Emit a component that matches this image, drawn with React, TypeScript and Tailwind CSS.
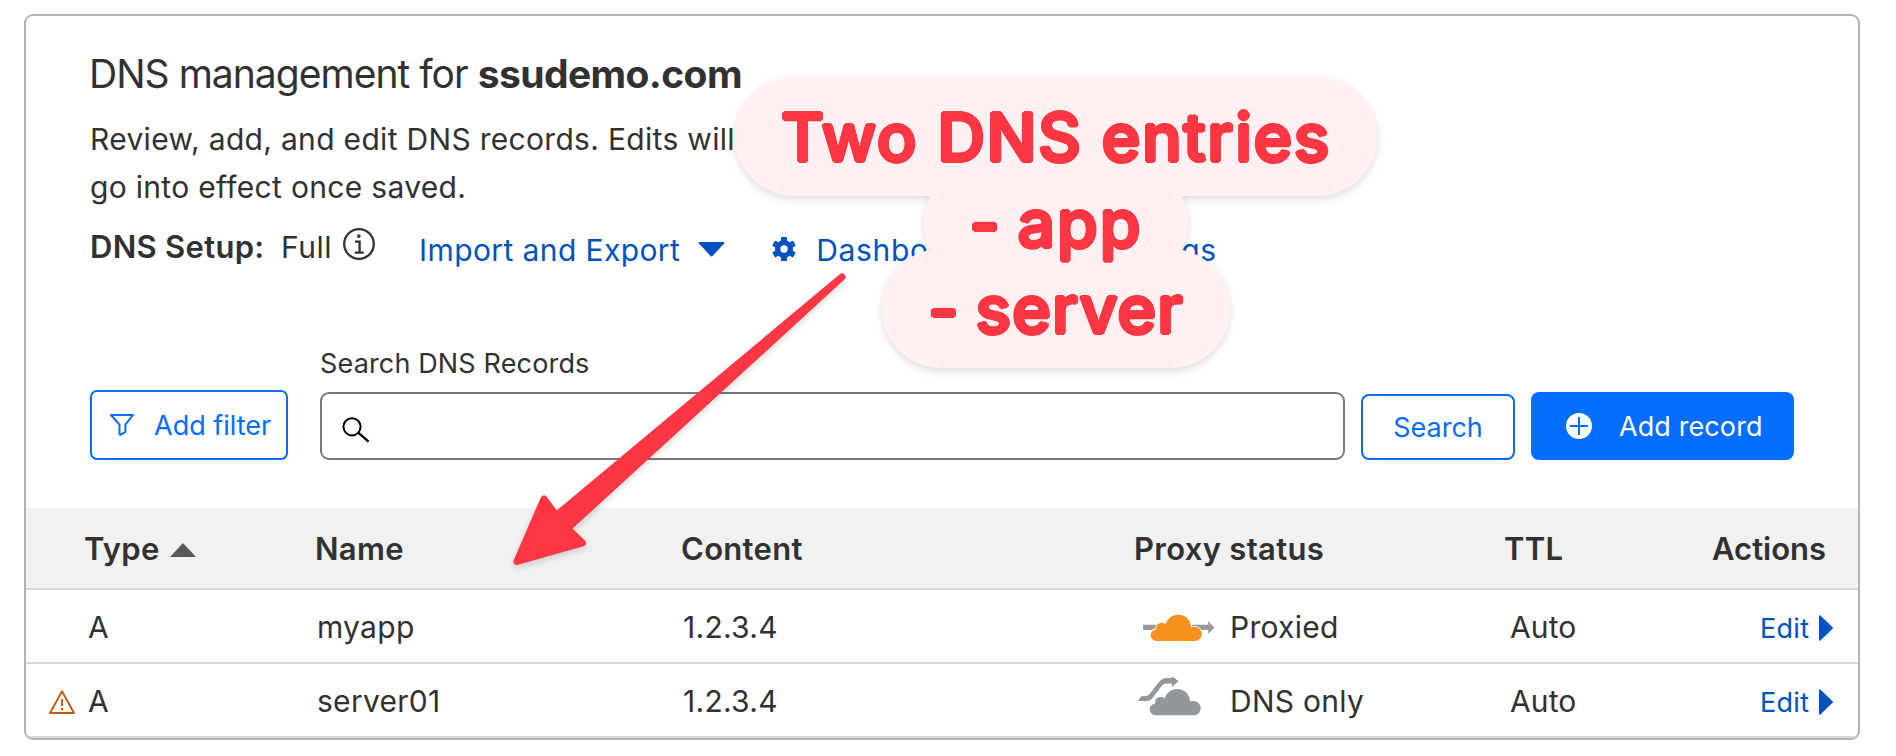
import React from "react";

const COLUMNS = "grid grid-cols-[58px_231px_366px_452px_371px_1fr]";

function InfoIcon() {
  return (
    <svg className="h-8 w-8" viewBox="0 0 32 32" fill="none" stroke="#313131">
      <circle cx="16" cy="16" r="14.8" strokeWidth="2.3" />
      <path d="M12 13.6h4.6V24.6M11.8 24.6h9" strokeWidth="2.3" />
      <rect x="14.2" y="6.6" width="3.2" height="3.2" fill="#313131" stroke="none" />
    </svg>
  );
}

function GearIcon() {
  return (
    <svg className="h-6 w-6" viewBox="0 0 24 24">
      <g fill="#0051c3">
        <rect x="9" y="0" width="6" height="24" rx="1" />
        <rect x="9" y="0" width="6" height="24" rx="1" transform="rotate(60 12 12)" />
        <rect x="9" y="0" width="6" height="24" rx="1" transform="rotate(120 12 12)" />
        <circle cx="12" cy="12" r="9" />
      </g>
      <circle cx="12" cy="12" r="3.7" fill="#fff" />
    </svg>
  );
}

function FunnelIcon() {
  return (
    <svg className="h-6 w-[26px]" viewBox="0 0 26 24" fill="none" stroke="#056dff" strokeWidth="2">
      <path d="M2 2h22l-7.6 9.6v7.2L11.4 21.8l-.9-.6V11.6z" strokeLinejoin="round" />
    </svg>
  );
}

function MagnifierIcon() {
  return (
    <svg className="h-[26px] w-7" viewBox="0 0 28 26" fill="none" stroke="#000" strokeWidth="2">
      <circle cx="10" cy="9.8" r="8.6" />
      <path d="M16.200 15.600l10.400 9" strokeWidth="2.400" />
    </svg>
  );
}

function PlusCircleIcon() {
  return (
    <svg className="h-[26px] w-[26px]" viewBox="0 0 26 26">
      <circle cx="13" cy="13" r="13" fill="#fff" />
      <path d="M13 4v18M4 13h18" stroke="#056dff" strokeWidth="2" />
    </svg>
  );
}

function WarningIcon() {
  return (
    <svg className="h-6 w-[26px]" viewBox="0 0 26 24" fill="none" stroke="#c25a0a" strokeWidth="1.9">
      <path d="M13 1.2L25 23H1z" strokeLinejoin="round" />
      <path d="M13 9v7M13 17.8v2.4" />
    </svg>
  );
}

const CLOUD =
  "M6.5 26.5C2.8 26.5.3 24.2.3 20.8c0-3.300 2.200-5.600 5.300-5.800-.3-4 2.100-6.600 5.500-6.600 1.600 0 3 .5 4.100 1.500C16.600 4.400 21.500.3 27.700.3c7.200 0 12.800 5.400 12.900 12.700 1-.5 1.900-.6 3-.6 4.400 0 7.600 3.200 7.600 7.100 0 4-2.900 7-7 7z";

function ProxiedIcon() {
  return (
    <svg className="h-7 w-[72px]" viewBox="0 0 72 28">
      <path d="M0 10.700h65.200V7.200l6.200 6.300-6.200 6.500v-3.900H0z" fill="#999" />
      <path d={CLOUD} transform="translate(7.500 .4)" fill="#f6901e" stroke="#fff" strokeWidth="1.600" paintOrder="stroke" />
    </svg>
  );
}

function DnsOnlyIcon() {
  return (
    <svg className="h-10 w-16" viewBox="0 0 64 40">
      <path
        d="M0 24.900l3.200-4.700 5.400-.3c1.700-.3 2.500-1.200 3.600-2.600l8.400-10.700c2.500-3.200 5-4.500 8.400-4.500h4.900V.2l6.700 5-6.700 5.700V7.400h-5.300c-2.300 0-3.600.9-5 2.700l-8.200 10.600c-2.200 2.900-4 4.200-7.200 4.200z"
        fill="#92979b"
      />
      <path d={CLOUD} transform="translate(11.500 12.700)" fill="#92979b" />
    </svg>
  );
}

type DnsRecord = { type: string; name: string; content: string; proxied: boolean; ttl: string; warn: boolean };

const records: DnsRecord[] = [
  { type: "A", name: "myapp", content: "1.2.3.4", proxied: true, ttl: "Auto", warn: false },
  { type: "A", name: "server01", content: "1.2.3.4", proxied: false, ttl: "Auto", warn: true },
];

function RecordRow({ record }: { record: DnsRecord }) {
  return (
    <div className={`${COLUMNS} h-[74px] items-center border-b-2 border-[#d9d9d9] pt-[3px] text-[30px] tracking-[0.28px]`}>
      <div className="pl-[23px]">{record.warn && <WarningIcon />}</div>
      <div className="pl-1">{record.type}</div>
      <div className="pl-0.5">{record.name}</div>
      <div className="pl-0.5">{record.content}</div>
      <div className="flex items-center">
        <div className="flex w-[97px] shrink-0">
          {record.proxied ? (
            <div className="pl-2.5">
              <ProxiedIcon />
            </div>
          ) : (
            <div className="-mt-3 pl-[5px]">
              <DnsOnlyIcon />
            </div>
          )}
        </div>
        {record.proxied ? "Proxied" : "DNS only"}
      </div>
      <div className="flex items-center">
        <span className="w-[256px] pl-1.5 tracking-[0.1px]">{record.ttl}</span>
        <a className="flex items-center text-[27px] leading-[36px] text-[#0051c3]">
          <span className="pt-0.5">Edit</span>
          <svg className="ml-2.5 h-[26px] w-[15px]" viewBox="0 0 15 26">
            <path d="M0 1.500Q0 0 1.400.4L14.300 13 1.400 25.600Q0 26 0 24.500z" fill="#0051c3" />
          </svg>
        </a>
      </div>
    </div>
  );
}

function Note() {
  return (
    <div className="absolute left-[735px] top-[77px] w-[642px]">
      <div className="flex flex-col items-center drop-shadow-[0_3px_4px_rgba(0,0,0,0.14)]">
        <div className="h-[119px] w-[642px] rounded-[59px] bg-[#fff0f1]" />
        <div className="-mt-[33px] h-[119px] w-[264px] rounded-[59px] bg-[#fff0f1]" />
        <div className="-mt-[33px] h-[119px] w-[348px] rounded-[59px] bg-[#fff0f1]" />
      </div>
      <div className="absolute inset-x-0 top-[17px] whitespace-nowrap text-center text-[66px] font-medium leading-[86px] tracking-[1.6px] text-[#fc3643] [text-shadow:1.8px_0_#fc3643,-1.8px_0_#fc3643,0_1.8px_#fc3643,0_-1.8px_#fc3643,1.3px_1.3px_#fc3643,-1.3px_1.3px_#fc3643,1.3px_-1.3px_#fc3643,-1.3px_-1.3px_#fc3643]">
        <div>Two DNS entries</div>
        <div className="tracking-[2px] [word-spacing:-4px]">- app</div>
        <div className="tracking-[1.1px] [word-spacing:-3px]">- server</div>
      </div>
    </div>
  );
}

function Arrow() {
  return (
    <svg
      className="absolute left-[500px] top-[260px] h-[320px] w-[360px] drop-shadow-[0_3px_3px_rgba(0,0,0,0.15)]"
      viewBox="500 260 360 320"
    >
      <path
        d="M842 277L556.300 515.500L544 499L517 561.500L582.500 543L567.500 528.500Z"
        fill="#fc3643"
        stroke="#fc3643"
        strokeWidth="7"
        strokeLinejoin="round"
      />
    </svg>
  );
}

export default function App() {
  return (
    <div className="relative h-[756px] w-[1896px] overflow-hidden bg-white pl-6 pt-3.5 font-[Inter,sans-serif] text-[#313131]">
      <div className="h-[726px] w-[1836px] overflow-hidden rounded-[9px] border-2 border-[#b3b3b3] bg-white">
        <div className="px-16 pt-[34px]">
          <h1 className="-ml-px whitespace-nowrap text-[39px] leading-[48px] tracking-[-0.97px]">
            DNS management for <b className="tracking-[-0.6px]">ssudemo.com</b>
          </h1>
          <p className="mt-[17px] w-[660px] whitespace-nowrap text-[30px] leading-[48px] tracking-[0.31px]">
            Review, add, and edit DNS records. Edits will
            <br />
            go into effect once saved.
          </p>
          <div className="-mr-4 mt-3 flex h-12 whitespace-nowrap text-[30px] leading-[48px]">
            <span className="w-[191px] text-[31px] font-semibold tracking-[0.3px]">DNS Setup:</span>
            <span className="w-[62px] tracking-[0.5px]">Full</span>
            <span className="pt-[5px]">
              <InfoIcon />
            </span>
            <a className="ml-11 flex pt-[3px] tracking-[0.4px] text-[#0051c3]">
              Import and Export
              <svg className="ml-[18px] mt-4 h-[15px] w-[27px]" viewBox="0 0 27 15">
                <path d="M1.500 0h24q1.500 0 .6 1.400L14.500 14q-1 1-2 0L.9 1.400Q0 0 1.500 0z" fill="#0051c3" />
              </svg>
            </a>
            <a className="ml-[47px] flex pt-[3px] tracking-[0.66px] text-[#0051c3]">
              <span className="mr-5 pt-[11px]">
                <GearIcon />
              </span>
              Dashboard display settings
            </a>
          </div>
          <div className="mt-[76px] flex items-end text-[27px]">
            <button className="flex h-[70px] w-[198px] items-center rounded-[7px] border-2 border-[#056dff] pl-[17px] text-[#056dff]">
              <FunnelIcon />
              <span className="ml-[19px] whitespace-nowrap pt-0.5">Add filter</span>
            </button>
            <div className="ml-8">
              <label className="block pt-px leading-8 tracking-[0.15px]">Search DNS Records</label>
              <div className="mt-3 flex h-[68px] w-[1025px] items-center rounded-[9px] border-2 border-[#797979] pl-5 pt-[7px]">
                <MagnifierIcon />
              </div>
            </div>
            <button className="ml-4 h-[66px] w-[154px] rounded-[8px] border-2 border-[#056dff] pt-0.5 text-[#056dff]">
              Search
            </button>
            <button className="ml-4 flex h-[68px] w-[263px] items-center rounded-[8px] bg-[#056dff] pl-[35px] text-white">
              <PlusCircleIcon />
              <span className="ml-[27px] whitespace-nowrap pt-0.5 tracking-[0.1px]">Add record</span>
            </button>
          </div>
        </div>
        <div className={`${COLUMNS} mt-12 h-[82px] items-center border-b-2 border-[#d9d9d9] bg-[#f1f1f1] pt-0.5 text-[31px] font-semibold tracking-[0.3px]`}>
          <div />
          <div className="flex items-center">
            Type
            <svg className="ml-2.5 mt-0.5 h-3.5 w-[26px]" viewBox="0 0 26 14">
              <path d="M13 0l13 14H0z" fill="#595959" />
            </svg>
          </div>
          <div>Name</div>
          <div>Content</div>
          <div className="pl-px">Proxy status</div>
          <div className="flex">
            <span className="w-[208px]">TTL</span>
            <span className="tracking-[0]">Actions</span>
          </div>
        </div>
        {records.map((record) => (
          <RecordRow key={record.name} record={record} />
        ))}
      </div>
      <Arrow />
      <Note />
    </div>
  );
}
